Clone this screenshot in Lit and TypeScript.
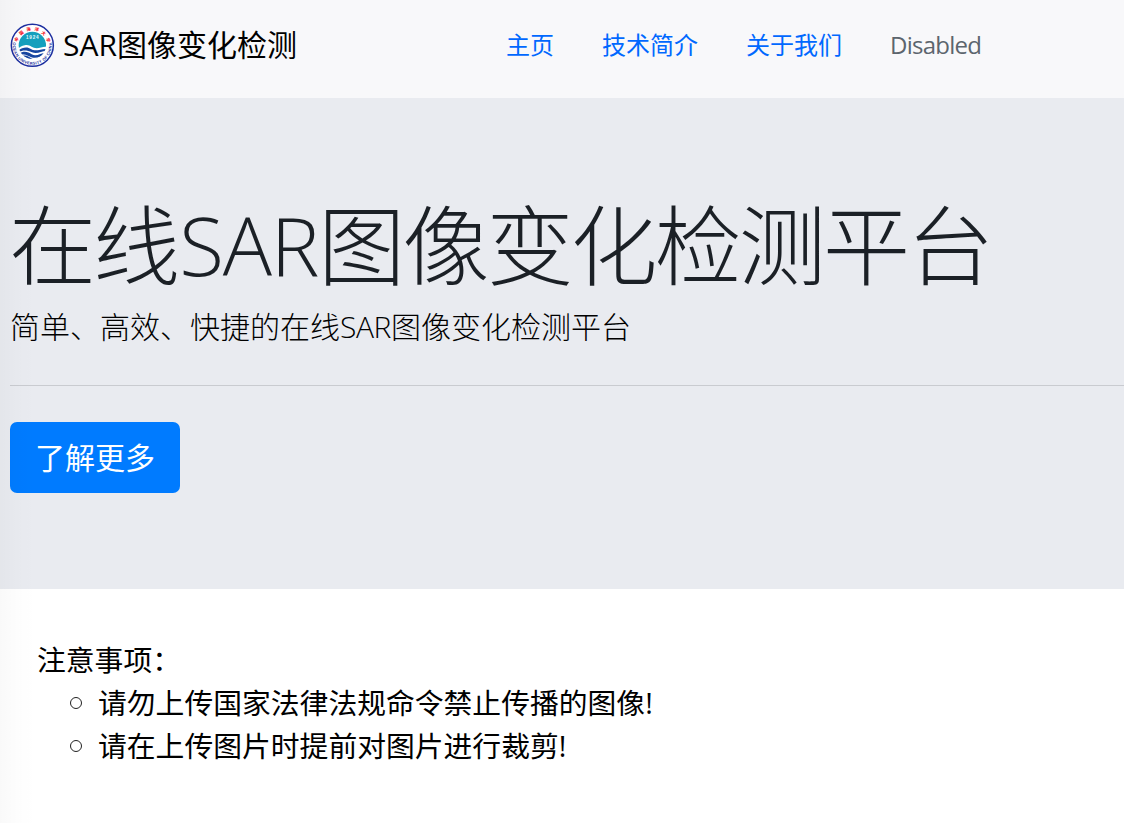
import { LitElement, html, css } from "lit";
import { customElement, property } from "lit/decorators.js";

@customElement("university-badge")
export class UniversityBadge extends LitElement {
  static styles = css`
    :host { display: block; width: 45px; height: 45px; }
    svg { display: block; width: 100%; height: 100%; }
    .cn { font: 900 13px "Noto Sans CJK SC", sans-serif; fill: #f5222e; }
    .en { font: 700 12px "Liberation Sans", sans-serif; fill: #1c2f9c; }
    .year { font: 700 14px "Liberation Sans", sans-serif; fill: #e4fbff; }
  `;
  render() {
    return html`
      <svg viewBox="0 0 135 135" aria-hidden="true">
        <defs>
          <path id="top" d="M21 68 A46 46 0 0 1 113 68" />
          <path id="bottom" d="M10.200 53 A58.500 58.500 0 1 0 123.800 53" />
          <clipPath id="disc"><circle cx="67" cy="67" r="41" /></clipPath>
        </defs>
        <circle cx="67" cy="67" r="63" fill="#fff" stroke="#1d2fa0" stroke-width="4.500" />
        <g clip-path="url(#disc)">
          <path d="M20 20H115V73C102 68 92 76 80 76C66 76 60 63 44 67C35 69 30 72 24 77Z" fill="#159fbd" />
          <path d="M24 83C38 72 52 70 63 78C76 87 90 78 112 78V84C96 82 84 95 66 88C50 81 40 80 24 88Z" fill="#1645a0" />
          <path d="M26 93C42 82 54 87 65 94C81 102 92 89 112 88V94C96 95 84 109 64 103C50 97 44 90 28 98Z" fill="#1645a0" />
          <path d="M38 99C48 95 56 102 66 107C80 111 90 104 104 99V112H60C54 108 48 101 38 102Z" fill="#1645a0" />
        </g>
        <text class="year" x="67" y="49" text-anchor="middle" textLength="38">1924</text>
        <text class="cn"><textPath href="#top" startOffset="11" textLength="124">中国海洋大学</textPath></text>
        <text class="en"><textPath href="#bottom" startOffset="5" textLength="201" lengthAdjust="spacing">OCEAN UNIVERSITY OF CHINA</textPath></text>
      </svg>
    `;
  }
}

@customElement("nav-bar")
export class NavBar extends LitElement {
  static styles = css`
    :host {
      display: flex; align-items: center; box-sizing: border-box;
      height: 98px; padding: 0 10px 8px; background: #f8f8fa;
    }
    .brand { display: flex; align-items: center; gap: 8px; width: 496px; font-size: 30px; color: #000; white-space: nowrap; }
    .name { margin-top: -1px; }
    .links { display: flex; gap: 48px; margin: 0; padding: 0; list-style: none; font-size: 24px; white-space: nowrap; }
    .link { color: #0068ff; text-decoration: none; }
    .disabled { color: #5c656d; letter-spacing: -0.75px; }
  `;
  links = ["主页", "技术简介", "关于我们"];
  render() {
    return html`
      <div class="brand"><university-badge></university-badge><span class="name">SAR图像变化检测</span></div>
      <ul class="links">
        ${this.links.map((l) => html`<li><a class="link" href="#">${l}</a></li>`)}
        <li><span class="disabled">Disabled</span></li>
      </ul>
    `;
  }
}

@customElement("hero-panel")
export class HeroPanel extends LitElement {
  static styles = css`
    :host { display: block; box-sizing: border-box; height: 491px; padding: 97px 0 0 10px; background: #e9ebf0; }
    .title { height: 101px; margin: 0 0 0 -1px; font-size: 87px; line-height: 101px; letter-spacing: -2.9px; font-weight: 300; color: #1b2026; white-space: nowrap; }
    .title .latin { margin-left: 2px; font-size: 82px; line-height: 1; letter-spacing: -1.2px; vertical-align: 3px; }
    .lead { height: 45px; margin: 8px 0 0; font-size: 30px; line-height: 45px; font-weight: 300; color: #000; white-space: nowrap; }
    .lead .latin { letter-spacing: -0.4px; }
    .rule { margin: 36px 0 36px; border: 0; border-top: 1px solid #c9cbd0; }
    .more {
      display: block; width: 170px; height: 71px; padding: 0; border: 0; border-radius: 7px;
      background: #007bff; color: #fff; font: inherit; font-size: 30px;
    }
  `;
  render() {
    return html`
      <h1 class="title">在线<span class="latin">SAR</span>图像变化检测平台</h1>
      <p class="lead">简单、高效、快捷的在线<span class="latin">SAR</span>图像变化检测平台</p>
      <hr class="rule" />
      <button class="more">了解更多</button>
    `;
  }
}

@customElement("notice-list")
export class NoticeList extends LitElement {
  static styles = css`
    :host { display: block; padding: 49px 0 0 37px; font-size: 28.8px; line-height: 43.2px; color: #000; }
    .heading { margin: 0; }
    .items { margin: 0; padding: 0 0 0 32px; list-style: none; }
    .item { display: flex; align-items: center; gap: 16px; white-space: nowrap; }
    .dot { flex: none; box-sizing: border-box; width: 12px; height: 12px; margin-left: 1px; border: 1px solid #222; border-radius: 50%; }
  `;
  @property({ type: Array }) items: string[] = [];
  render() {
    return html`
      <p class="heading">注意事项：</p>
      <ul class="items">
        ${this.items.map((t) => html`<li class="item"><span class="dot"></span><span>${t}</span></li>`)}
      </ul>
    `;
  }
}

@customElement("app-root")
export class AppRoot extends LitElement {
  static styles = css`
    :host {
      display: block; position: relative; height: 823px; overflow: hidden; background: #fff;
      font-family: "Open Sans", "Noto Sans CJK SC", sans-serif; line-height: 1.5;
    }
    .edge {
      position: absolute; inset: 0 auto 0 0; width: 36px; pointer-events: none;
      background: linear-gradient(90deg, rgba(0, 0, 0, 0.025), rgba(0, 0, 0, 0.008) 50%, transparent);
    }
  `;
  notices = ["请勿上传国家法律法规命令禁止传播的图像!", "请在上传图片时提前对图片进行裁剪!"];
  render() {
    return html`
      <nav-bar></nav-bar>
      <hero-panel></hero-panel>
      <notice-list .items=${this.notices}></notice-list>
      <div class="edge"></div>
    `;
  }
}
